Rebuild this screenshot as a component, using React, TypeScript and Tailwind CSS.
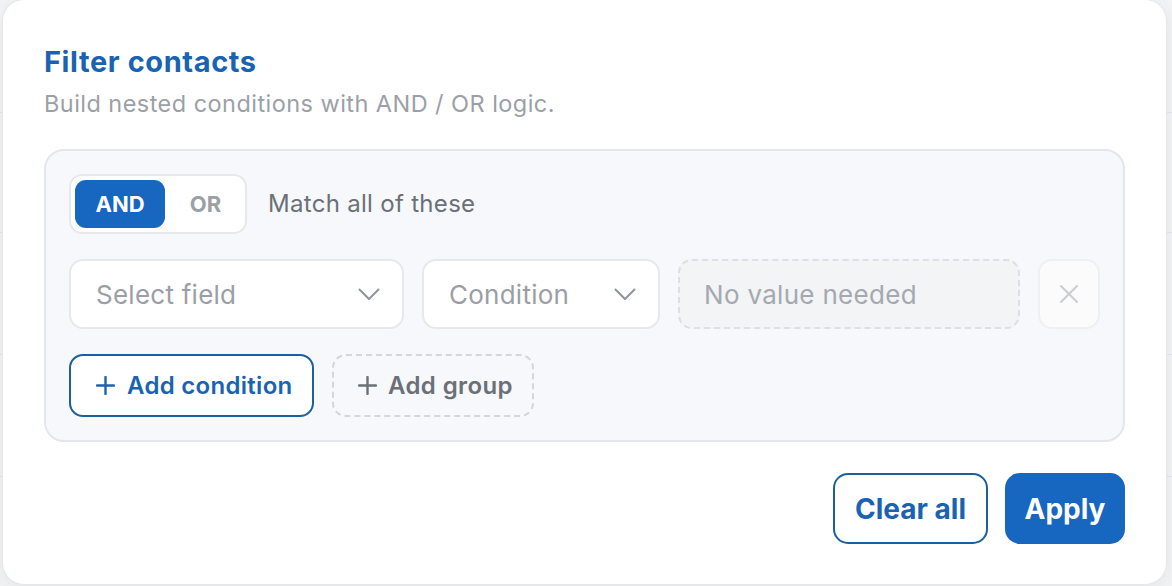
import React, { useState } from "react";

type Logic = "AND" | "OR";

function Chevron() {
  return (
    <svg width="22" height="13" viewBox="0 0 22 13" fill="none" className="shrink-0">
      <path d="M1.5 1.5 11 11 20.5 1.5" stroke="#8f949c" strokeWidth="2" strokeLinecap="round" strokeLinejoin="round" />
    </svg>
  );
}

function Plus({ color }: { color: string }) {
  return (
    <svg width="19" height="19" viewBox="0 0 19 19" fill="none" className="shrink-0">
      <path d="M9.5 1v17M1 9.5h17" stroke={color} strokeWidth="2.4" strokeLinecap="round" />
    </svg>
  );
}

function Cross() {
  return (
    <svg width="20" height="20" viewBox="0 0 20 20" fill="none">
      <path d="M2 2l16 16M18 2 2 18" stroke="#c9ccd1" strokeWidth="2" strokeLinecap="round" />
    </svg>
  );
}

function SelectBox({ label, width }: { label: string; width: string }) {
  return (
    <button
      className={`${width} flex h-[70px] shrink-0 items-center justify-between rounded-[14px] border-2 border-[#e6e8eb] bg-white pl-[25px] pr-[22px] text-[26px] tracking-[0.25px] text-[#9a9ea5]`}
    >
      <span>{label}</span>
      <Chevron />
    </button>
  );
}

export default function App() {
  const [logic, setLogic] = useState<Logic>("AND");

  return (
    <div
      className="relative h-[586px] w-[1172px] overflow-hidden bg-[#f2f3f5]"
      style={{ fontFamily: "Inter, 'Noto Sans', sans-serif" }}
    >
      {/* table rows peeking out behind the dialog */}
      <div className="flex flex-col pt-[112px]">
        <div className="h-[120px] border-t border-[#e3e5e8]" />
        <div className="h-[122px] border-t border-[#e3e5e8]" />
        <div className="h-[122px] border-t border-[#e3e5e8]" />
        <div className="h-[122px] border-t border-[#e3e5e8]" />
      </div>

      <div className="absolute left-[2px] top-[-1px] flex h-[586px] w-[1165px] flex-col rounded-[22px] border border-[#e4e6e9] bg-white px-[41px] pt-[45px] shadow-[0_4px_20px_rgba(0,0,0,0.06)]">
        <h2 className="text-[29px] font-bold leading-[34px] tracking-[0.6px] text-[#1a63b3]">Filter contacts</h2>
        <p className="mt-[10px] text-[23.5px] leading-[30px] tracking-[0.45px] text-[#9b9fa6]">
          Build nested conditions with AND / OR logic.
        </p>

        <div className="mt-[30px] flex flex-col gap-[25px] rounded-[20px] border-2 border-[#e3e6ea] bg-[#f6f8fb] px-[23px] pb-[23px] pt-[23px]">
          <div className="flex items-center gap-[21px]">
            <div className="flex h-[60px] items-center rounded-[13px] border-2 border-[#e6e8eb] bg-white p-[4px]">
              {(["AND", "OR"] as Logic[]).map((opt) => (
                <button
                  key={opt}
                  onClick={() => setLogic(opt)}
                  className={
                    logic === opt
                      ? "flex h-[48px] w-[90px] items-center justify-center rounded-[11px] bg-[#1766bf] text-[22px] font-bold text-white"
                      : "flex h-[48px] w-[76px] items-center justify-center rounded-[11px] pl-[5px] text-[22px] font-bold text-[#9b9fa6]"
                  }
                >
                  {opt}
                </button>
              ))}
            </div>
            <span className="text-[24px] tracking-[0.3px] text-[#6b7078]">
              {logic === "AND" ? "Match all of these" : "Match any of these"}
            </span>
          </div>

          <div className="flex items-center gap-[18px]">
            <SelectBox label="Select field" width="w-[335px]" />
            <SelectBox label="Condition" width="w-[238px]" />
            <div className="flex h-[70px] w-[342px] shrink-0 items-center rounded-[14px] border-2 border-dashed border-[#dcdfe3] bg-[#f2f4f6] pl-[24px] text-[26px] tracking-[0.3px] text-[#a5a9af]">
              No value needed
            </div>
            <button className="flex h-[70px] w-[62px] shrink-0 items-center justify-center rounded-[14px] border-2 border-[#eff0f2] bg-[#fbfbfc]">
              <Cross />
            </button>
          </div>

          <div className="flex items-center gap-[18px]">
            <button className="flex h-[63px] w-[245px] items-center gap-[12px] rounded-[14px] border-2 border-[#1d5f9e] bg-white pl-[25px] text-[24px] font-semibold tracking-[0.3px] text-[#1a63b3]">
              <Plus color="#1a63b3" />
              Add condition
            </button>
            <button className="flex h-[63px] w-[202px] items-center gap-[11px] rounded-[14px] border-2 border-dashed border-[#d3d6da] pl-[24px] text-[24px] font-semibold tracking-[0.4px] text-[#6b7078]">
              <Plus color="#6b7078" />
              Add group
            </button>
          </div>
        </div>

        <div className="mt-[31px] flex justify-end gap-[17px]">
          <button className="h-[71px] w-[155px] rounded-[15px] border-2 border-[#1d5f9e] bg-white text-[28px] font-bold text-[#1a63b3]">
            Clear all
          </button>
          <button className="h-[71px] w-[120px] rounded-[15px] bg-[#1766bf] text-[28px] font-bold text-white">
            Apply
          </button>
        </div>
      </div>
    </div>
  );
}
